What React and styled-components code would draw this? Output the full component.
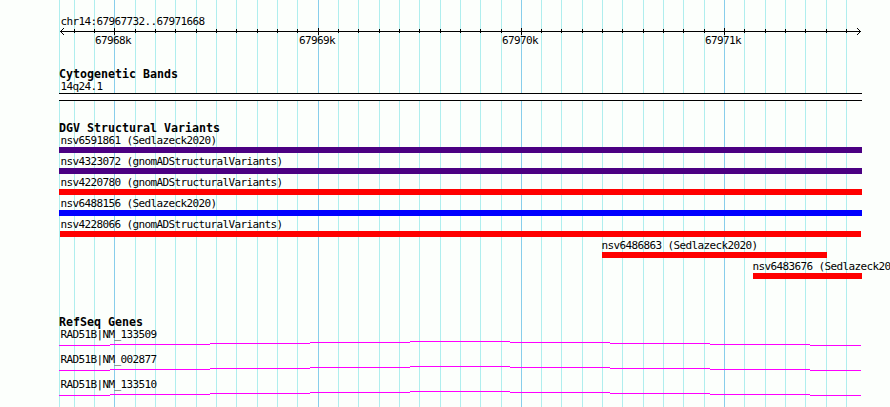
import React from "react";
import styled, { createGlobalStyle } from "styled-components";

const GlobalStyle = createGlobalStyle`
  body {
    margin: 0;
    background: #fcfffc;
    overflow: hidden;
  }
`;

const LEFT = 59;
const MAJOR = [114, 318, 521, 724];
const MINOR = [
  74, 94, 135, 155, 175, 196, 216, 236, 257, 277, 297, 338, 358, 379, 399, 419,
  440, 460, 480, 501, 541, 561, 582, 602, 622, 643, 663, 683, 704, 744, 765,
  785, 805, 826, 846,
];

const Browser = styled.main`
  position: relative;
  box-sizing: border-box;
  width: 890px;
  height: 407px;
  padding: 15px 0 0 ${LEFT}px;
  overflow: hidden;
  background: #fcfffc;
  color: #000;
`;

const GridLines = styled.svg`
  position: absolute;
  inset: 0;
`;

const Content = styled.div`
  position: relative;
`;

const Label = styled.div`
  height: 12px;
  font: 11px/14px "DejaVu Sans Mono", monospace;
  letter-spacing: -0.622px;
  text-indent: ${(p) => p.$indent ?? 1.4}px;
  white-space: pre;
`;

const Drawing = styled.svg`
  display: block;
`;

const ScaleLabels = styled.div`
  display: grid;
  grid-template-columns: 204px 203px 203px 60px;
  padding-left: 35px;
`;

const Track = styled.section`
  margin-top: ${(p) => p.$gap}px;
`;

const TrackTitle = styled.h2`
  height: 12px;
  margin: 0;
  font: bold 11.63px/12px "DejaVu Sans Mono", monospace;
  white-space: pre;
`;

const Band = styled.div`
  box-sizing: border-box;
  width: 803px;
  height: 8px;
  margin-top: 1px;
  border: solid #000;
  border-width: 1px 0;
  background: #fff;
`;

const Variant = styled.div`
  height: 21px;
  margin-left: ${(p) => p.$start - LEFT}px;
`;

const VariantBar = styled.div`
  width: ${(p) => p.$width}px;
  height: 6px;
  margin-top: 1px;
  background: ${(p) => p.$color};
`;

const Gene = styled.div`
  height: 25px;
`;

const VARIANTS = [
  { name: "nsv6591861 (Sedlazeck2020)", start: 59, end: 862, color: "#4b0082", indent: 1.4 },
  { name: "nsv4323072 (gnomADStructuralVariants)", start: 59, end: 862, color: "#4b0082", indent: 1.4 },
  { name: "nsv4220780 (gnomADStructuralVariants)", start: 59, end: 862, color: "#ff0000", indent: 1.4 },
  { name: "nsv6488156 (Sedlazeck2020)", start: 59, end: 862, color: "#0000ff", indent: 1.4 },
  { name: "nsv4228066 (gnomADStructuralVariants)", start: 60, end: 861, color: "#ff0000", indent: 0.4 },
  { name: "nsv6486863 (Sedlazeck2020)", start: 602, end: 827, color: "#ff0000", indent: -0.6 },
  { name: "nsv6483676 (Sedlazeck2020)", start: 753, end: 862, color: "#ff0000", indent: -0.6 },
];

const GENES = ["RAD51B|NM_133509", "RAD51B|NM_002877", "RAD51B|NM_133510"];

// Intron segments: [start, end, row], stepping up to the middle and back down.
const INTRON = [
  [59, 110, 4], [110, 210, 3], [210, 310, 2], [310, 410, 1], [410, 510, 0],
  [510, 610, 1], [610, 710, 2], [710, 810, 3], [810, 861, 4],
];

function Ruler() {
  return (
    <Drawing width="803" height="7" viewBox="59 27 803 7" overflow="visible" shapeRendering="crispEdges">
      <rect x="60" y="31" width="801" height="1" />
      {MINOR.map((x) => <rect key={x} x={x} y="29" width="1" height="4" />)}
      {MAJOR.map((x) => <rect key={x} x={x} y="28" width="1" height="7" />)}
      {[1, 2, 3].map((d) => (
        <React.Fragment key={d}>
          <rect x={60 + d} y={31 - d} width="1" height="1" />
          <rect x={60 + d} y={31 + d} width="1" height="1" />
          <rect x={860 - d} y={31 - d} width="1" height="1" />
          <rect x={860 - d} y={31 + d} width="1" height="1" />
        </React.Fragment>
      ))}
    </Drawing>
  );
}

export default function App() {
  return (
    <>
      <GlobalStyle />
      <Browser>
        <GridLines width="890" height="407" shapeRendering="crispEdges">
          {[LEFT, ...MINOR].map((x) => (
            <rect key={x} x={x} y="0" width="1" height="407" fill="#afeeee" />
          ))}
          {MAJOR.map((x) => (
            <rect key={x} x={x} y="0" width="1" height="407" fill="#87ceeb" />
          ))}
        </GridLines>
        <Content>
          <Label>chr14:67967732..67971668</Label>
          <Ruler />
          <ScaleLabels>
            {["67968k", "67969k", "67970k", "67971k"].map((t) => <Label key={t} $indent={1}>{t}</Label>)}
          </ScaleLabels>
          <Track $gap={22}>
            <TrackTitle>Cytogenetic Bands</TrackTitle>
            <Label>14q24.1</Label>
            <Band />
          </Track>
          <Track $gap={21}>
            <TrackTitle>DGV Structural Variants</TrackTitle>
            {VARIANTS.map((v) => (
              <Variant key={v.name} $start={v.start}>
                <Label $indent={v.indent}>{v.name}</Label>
                <VariantBar $width={v.end - v.start} $color={v.color} />
              </Variant>
            ))}
          </Track>
          <Track $gap={35}>
            <TrackTitle>RefSeq Genes</TrackTitle>
            {GENES.map((g) => (
              <Gene key={g}>
                <Label>{g}</Label>
                <Drawing width="803" height="6" viewBox="59 -1 803 6" shapeRendering="crispEdges">
                  {INTRON.map(([start, end, row]) => (
                    <rect key={start} x={start} y={row} width={end - start} height="1" fill="#ff00ff" />
                  ))}
                </Drawing>
              </Gene>
            ))}
          </Track>
        </Content>
      </Browser>
    </>
  );
}
